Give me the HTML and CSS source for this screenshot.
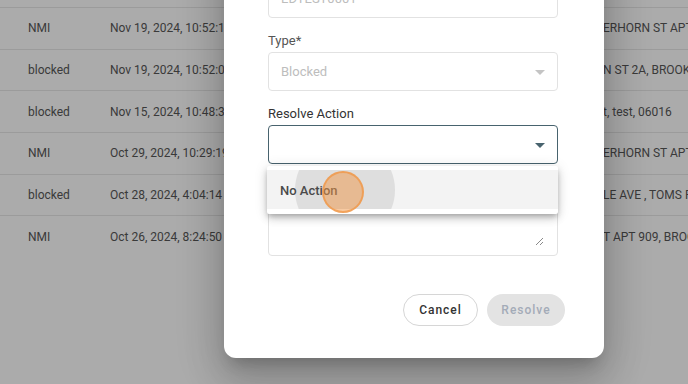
FILE: index.html
```html
<!DOCTYPE html>
<html lang="en">
<head>
  <meta charset="UTF-8">
  <meta name="viewport" content="width=device-width, initial-scale=1.0">
  <title>Resolve Fraud Entry</title>
  <link rel="stylesheet" href="styles.css">
</head>
<body>
  <!-- Таблица на заднем плане -->
  <div class="grid">
    <div class="grid-row"><span class="c-type">NMI</span><span class="c-date">Nov 19, 2024, 10:52:19 AM</span><span class="c-addr">ERHORN ST APT 12</span></div>
    <div class="grid-row"><span class="c-type">blocked</span><span class="c-date">Nov 19, 2024, 10:52:04 AM</span><span class="c-addr">N ST 2A, BROOKLYN</span></div>
    <div class="grid-row"><span class="c-type">blocked</span><span class="c-date">Nov 15, 2024, 10:48:37 AM</span><span class="c-addr">t, test, 06016</span></div>
    <div class="grid-row"><span class="c-type">NMI</span><span class="c-date">Oct 29, 2024, 10:29:19 AM</span><span class="c-addr">ERHORN ST APT 12</span></div>
    <div class="grid-row"><span class="c-type">blocked</span><span class="c-date">Oct 28, 2024, 4:04:14 PM</span><span class="c-addr">LE AVE , TOMS RIVER</span></div>
    <div class="grid-row"><span class="c-type">NMI</span><span class="c-date">Oct 26, 2024, 8:24:50 AM</span><span class="c-addr">T APT 909, BROOKLYN</span></div>
  </div>

  <!-- Модальное окно -->
  <div class="overlay">
    <div class="dialog">
      <div class="field">
        <label class="field-label">Merchant ID*</label>
        <div class="control control-disabled">EDTEST0001</div>
      </div>
      <div class="field">
        <label class="field-label">Type*</label>
        <div class="control control-disabled">Blocked<span class="caret caret-light"></span></div>
      </div>
      <div class="field field-menu">
        <label class="field-label field-label-dark">Resolve Action</label>
        <div class="control control-focus"><span class="caret caret-dark"></span></div>
        <div class="menu">
          <div class="menu-item">
            <span class="ripple"></span>
            <span class="menu-text">No Action</span>
          </div>
        </div>
      </div>
      <div class="field">
        <label class="field-label">Notes</label>
        <div class="notes">
          <svg class="grip" width="9" height="9" viewBox="0 0 9 9">
            <path d="M1 8 L8 1 M5 8 L8 5" stroke="#8a8a8a" stroke-width="1" fill="none"/>
          </svg>
        </div>
      </div>
      <div class="actions">
        <button class="btn btn-outline">Cancel</button>
        <button class="btn btn-disabled">Resolve</button>
      </div>
    </div>
    <span class="click-dot"></span>
  </div>
</body>
</html>
```

FILE: styles.css
```css
body {
  margin: 0;
  width: 688px;
  height: 384px;
  overflow: hidden;
  background: #fff;
  font-family: Roboto, "Liberation Sans", sans-serif;
  position: relative;
}
.grid {
  padding-top: 7px;
}
.grid-row {
  display: flex;
  align-items: center;
  height: 41.67px;
  box-sizing: border-box;
  border-top: 1px solid #e8e8e8;
  font-size: 12px;
  color: #575757;
  white-space: nowrap;
}
.c-type {
  width: 82px;
  padding-left: 28px;
  flex: none;
}
.c-date {
  width: 493px;
  flex: none;
}
.overlay {
  position: absolute;
  inset: 0;
  background: rgba(0,0,0,0.33);
  display: flex;
  align-items: flex-end;
  padding-left: 224px;
  padding-bottom: 26px;
  box-sizing: border-box;
  overflow: hidden;
}
.dialog {
  width: 380px;
  box-sizing: border-box;
  background: #fff;
  border-radius: 12px;
  padding: 20px 46px 32px 44px;
  display: flex;
  flex-direction: column;
  gap: 14px;
  box-shadow: 0 11px 15px -7px rgba(0,0,0,0.2), 0 24px 38px 3px rgba(0,0,0,0.14), 0 9px 46px 8px rgba(0,0,0,0.12);
  flex: none;
}
.field {
  display: flex;
  flex-direction: column;
  gap: 2px;
  position: relative;
}
.field-label {
  font-size: 13px;
  line-height: 18px;
  color: #555;
}
.field-label-dark {
  color: #333;
}
.control {
  height: 39px;
  box-sizing: border-box;
  border: 1px solid #e2e2e2;
  border-radius: 4px;
  display: flex;
  align-items: center;
  padding: 0 12px;
  font-size: 13px;
  position: relative;
}
.control-disabled {
  color: #bdbdbd;
}
.control-focus {
  border: 1.5px solid #48636e;
}
.caret {
  position: absolute;
  right: 12px;
  top: 50%;
  margin-top: -2px;
  width: 0;
  height: 0;
  border-left: 5px solid transparent;
  border-right: 5px solid transparent;
}
.caret-light {
  border-top: 5px solid #c4c4c4;
}
.caret-dark {
  border-top: 5px solid #48636e;
}
.menu {
  position: absolute;
  top: calc(100% + 2px);
  left: -1px;
  right: 0;
  z-index: 5;
  background: #fff;
  padding: 4px 0 5px;
  border-radius: 2px;
  box-shadow: 0 3px 5px -1px rgba(0,0,0,0.2), 0 5px 8px 0 rgba(0,0,0,0.14), 0 1px 14px 0 rgba(0,0,0,0.12);
}
.menu-item {
  height: 39px;
  background: #f3f3f3;
  display: flex;
  align-items: center;
  padding-left: 13px;
  position: relative;
  overflow: hidden;
}
.ripple {
  position: absolute;
  left: 28px;
  top: -30px;
  width: 100px;
  height: 100px;
  border-radius: 50%;
  background: #dedede;
}
.menu-text {
  position: relative;
  padding-top: 2px;
  font-size: 13px;
  font-weight: 500;
  color: #4a4a4a;
}
.notes {
  height: 58px;
  box-sizing: border-box;
  border: 1px solid #e2e2e2;
  border-radius: 4px;
  display: flex;
  justify-content: flex-end;
  align-items: flex-end;
  padding: 0 13px 9px 0;
}
.grip {
  display: block;
}
.actions {
  display: flex;
  justify-content: flex-end;
  gap: 9px;
  margin-top: 24px;
  margin-right: -7px;
}
.btn {
  height: 32px;
  border-radius: 16px;
  font-family: inherit;
  font-size: 12px;
  font-weight: 500;
  letter-spacing: 1px;
  padding: 0;
}
.btn-outline {
  width: 75px;
  background: #fff;
  border: 1px solid #d6d6d6;
  color: #333;
}
.btn-disabled {
  width: 78px;
  background: #e3e3e3;
  border: none;
  color: #a3abb8;
}
.click-dot {
  position: absolute;
  left: 322px;
  top: 171px;
  width: 42px;
  height: 42px;
  box-sizing: border-box;
  border-radius: 50%;
  background: rgba(240,150,70,0.5);
  border: 2px solid rgba(240,150,70,0.75);
  z-index: 10;
}
```
